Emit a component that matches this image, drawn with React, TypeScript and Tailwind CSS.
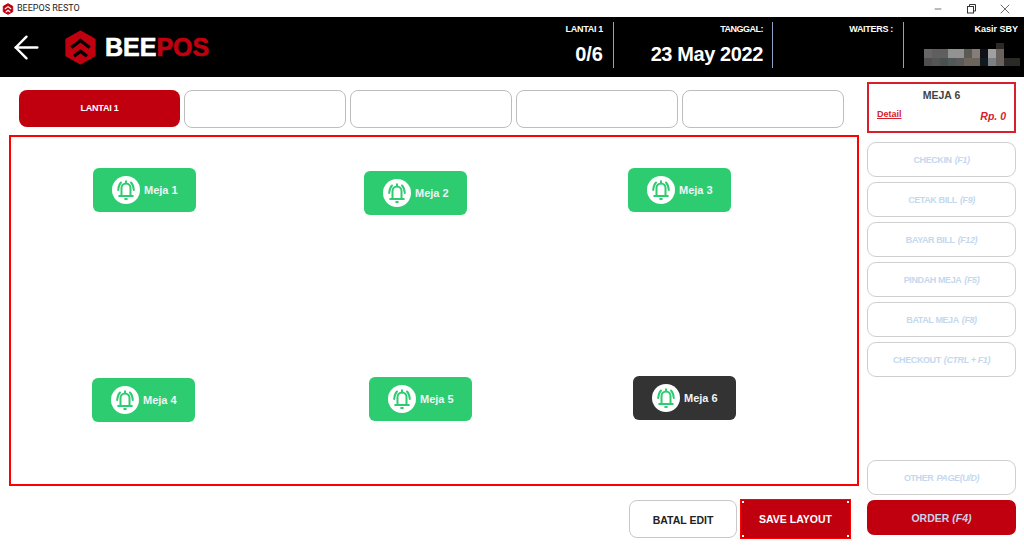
import { ArrowLeft, Minus, X } from "lucide-react";

const tables = [
  { name: "Meja 1", pos: "left-[82px] top-[31px]" },
  { name: "Meja 2", pos: "left-[353px] top-[34px]" },
  { name: "Meja 3", pos: "left-[617px] top-[31px]" },
  { name: "Meja 4", pos: "left-[81px] top-[241px]" },
  { name: "Meja 5", pos: "left-[358px] top-[240px]" },
  { name: "Meja 6", pos: "left-[622px] top-[239px]", active: true },
];

const sideButtons = [
  ["CHECKIN", "(F1)"],
  ["CETAK BILL", "(F9)"],
  ["BAYAR BILL", "(F12)"],
  ["PINDAH MEJA", "(F5)"],
  ["BATAL MEJA", "(F8)"],
  ["CHECKOUT", "(CTRL + F1)"],
];

// blurred cashier name in the header
const mosaic = [
  "bg-black", "bg-black", "bg-black", "bg-black", "bg-black", "bg-black", "bg-black", "bg-black", "bg-black", "bg-[#2c2826]", "bg-black", "bg-black",
  "bg-[#666666]", "bg-[#5f5f5f]", "bg-[#5f5f5f]", "bg-[#929292]", "bg-[#929292]", "bg-[#5a5a55]", "bg-[#857d78]", "bg-[#0f1018]", "bg-[#a0a0a0]", "bg-[#6a625e]", "bg-black", "bg-black",
  "bg-[#4f4f4f]", "bg-[#555555]", "bg-[#4a5050]", "bg-[#505858]", "bg-[#5a5a5a]", "bg-[#6d655c]", "bg-[#6d655c]", "bg-[#101820]", "bg-[#7a8085]", "bg-[#6a625e]", "bg-[#2a2a28]", "bg-[#2b2b26]",
];

function Logo({ w, h, mark }: { w: number; h: number; mark: string }) {
  return (
    <svg width={w} height={h} viewBox="0 0 36 38">
      <path d="M18 2 L33 10.5 V27.5 L18 36 L3 27.5 V10.5 Z" fill="#c1000f" stroke="#c1000f" strokeWidth="3" strokeLinejoin="round" />
      <path d="M8 19 L18 11.5 L28 19" fill="none" stroke={mark} strokeWidth="3.6" />
      <path d="M11 28.5 L18 23 L25 28.5" fill="none" stroke={mark} strokeWidth="3.6" />
    </svg>
  );
}

function Bell() {
  return (
    <svg width="28" height="28" viewBox="0 0 28 28" fill="none" stroke="#2ecc71" strokeWidth="2" strokeLinecap="round">
      <path d="M9.5 19.5 V12 a4.5 4.5 0 0 1 9 0 V19.5" />
      <path d="M14 5.2 v2" />
      <path d="M7.2 20 H20.8" />
      <path d="M13.2 23 h1.6" />
      <path d="M9 6.5 Q6.5 9 6.2 14" />
      <path d="M19 6.5 Q21.5 9 21.8 14" />
    </svg>
  );
}

function Table({ name, pos, active }: { name: string; pos: string; active?: boolean }) {
  return (
    <div
      className={`absolute ${pos} w-[103px] h-[44px] rounded-[6px] flex items-center pl-[19px] gap-[4px] ${
        active ? "bg-[#333333]" : "bg-[#2ecc71]"
      }`}
    >
      <div className="w-[28px] h-[28px] rounded-full bg-white">
        <Bell />
      </div>
      <span className="text-[11px] font-bold text-[#f0f4f8]">{name}</span>
    </div>
  );
}

function SideButton({ label, keys }: { label: string; keys: string }) {
  return (
    <div className="h-[35px] pt-[2px] rounded-[9px] border border-[#cfcfcf] bg-white flex items-center justify-center gap-[3px] text-[9px] font-bold tracking-[-0.4px] text-[#c5d8ee]">
      <span>{label}</span>
      <span className="italic">{keys}</span>
    </div>
  );
}

function Corner({ pos }: { pos: string }) {
  return <div className={`absolute ${pos} w-[2px] h-[2px] bg-white`} />;
}

export default function App() {
  return (
    <div className="w-[1024px] h-[546px] overflow-hidden bg-white flex flex-col font-['Liberation_Sans',Arial,sans-serif]">
      {/* Title bar */}
      <div className="h-[17px] flex items-center pl-[2px] text-[#222]">
        <Logo w={12} h={12} mark="#ffffff" />
        <span className="ml-[3px] text-[9px] font-['Roboto',sans-serif]">BEEPOS RESTO</span>
        <div className="ml-auto flex items-center gap-[21px] pr-[11px]">
          <Minus className="w-[10px] h-[10px] mr-[2px]" strokeWidth={1.5} />
          <svg width="10" height="10" viewBox="0 0 10 10" fill="none" stroke="#333" strokeWidth="1">
            <rect x="1.5" y="2.5" width="6" height="6.5" />
            <path d="M3.5 2.5 V0.5 H9.5 V7 H7.5" />
          </svg>
          <X className="w-[16px] h-[16px]" strokeWidth={1} />
        </div>
      </div>

      {/* Header */}
      <header className="h-[60px] bg-black flex text-white">
        <div className="flex items-center pl-[8px]">
          <ArrowLeft className="w-[37px] h-[37px]" strokeWidth={1.6} />
          <div className="ml-[19px] flex">
            <Logo w={33} h={35} mark="#000000" />
          </div>
          <span className="ml-[8px] text-[25px] leading-none font-bold [-webkit-text-stroke:0.6px]">
            BEE<span className="text-[#c1000f]">POS</span>
          </span>
        </div>
        <div className="ml-auto flex h-[46px] mt-[5px]">
          <div className="w-[60px] pr-[10px] text-right border-r border-[#8fa3c7] box-content">
            <div className="text-[9px] font-bold leading-[12px] mt-[1px] tracking-[-0.3px]">LANTAI 1</div>
            <div className="text-[20px] font-bold leading-[23px] mt-[8px]">0/6</div>
          </div>
          <div className="w-[149px] pr-[9px] text-right border-r border-[#8fa3c7] box-content">
            <div className="text-[9px] font-bold leading-[12px] mt-[1px] tracking-[-0.5px]">TANGGAL:</div>
            <div className="text-[20px] font-bold leading-[23px] mt-[8px] tracking-[-0.4px]">23 May 2022</div>
          </div>
          <div className="w-[120px] pr-[10px] text-right border-r border-[#8fa3c7] box-content">
            <div className="text-[9px] font-bold leading-[12px] mt-[1px] tracking-[-0.3px]">WAITERS :</div>
          </div>
          <div className="w-[114px] pr-[6px] text-right box-content">
            <div className="text-[9px] font-bold leading-[12px] mt-[1px]">Kasir SBY</div>
            <div className="mt-[8px] ml-[20px] w-[96px] grid grid-cols-[repeat(12,8px)] grid-rows-[6px_9px_8px]">
              {mosaic.map((c, i) => (
                <div key={i} className={c} />
              ))}
            </div>
          </div>
        </div>
      </header>

      {/* Body */}
      <div className="flex-1 flex">
        <main className="w-[867px] flex flex-col">
          <div className="flex gap-[4px] pl-[19px] mt-[13px]">
            <div className="w-[161px] h-[37px] rounded-[8px] bg-[#c1000f] flex items-center justify-center text-[9px] font-bold tracking-[-0.2px] text-white">
              LANTAI 1
            </div>
            {[0, 1, 2, 3].map((i) => (
              <div key={i} className="w-[162px] h-[38px] rounded-[8px] border border-[#bdbdbd] bg-white" />
            ))}
          </div>

          <div className="relative ml-[9px] mt-[7px] w-[850px] h-[351px] border-2 border-[#ff0000]">
            {tables.map((t) => (
              <Table key={t.name} {...t} />
            ))}
          </div>

          <div className="flex justify-end gap-[3px] pr-[16px] mt-[14px]">
            <div className="w-[108px] h-[38px] pt-[3px] rounded-[8px] border border-[#c8c8c8] flex items-center justify-center text-[10.5px] font-bold text-[#222]">
              BATAL EDIT
            </div>
            <div className="relative w-[111px] h-[40px] -mt-[1px] pt-[2px] border border-[#ff0000] bg-[#c1000f] flex items-center justify-center text-[10.5px] font-bold text-white">
              SAVE LAYOUT
              <Corner pos="left-[1px] top-[1px]" />
              <Corner pos="right-[1px] top-[1px]" />
              <Corner pos="left-[1px] bottom-[1px]" />
              <Corner pos="right-[1px] bottom-[1px]" />
            </div>
          </div>
        </main>

        {/* Right panel */}
        <aside className="w-[149px] flex flex-col mt-[5px]">
          <div className="h-[51px] border-2 border-[#d8202c] px-[8px] pt-[4px]">
            <div className="text-center text-[10.5px] font-bold text-[#444] leading-[14px]">MEJA 6</div>
            <div className="flex justify-between items-center mt-[2px]">
              <span className="text-[9px] font-bold text-[#d8202c] underline">Detail</span>
              <span className="text-[10.5px] font-bold italic text-[#d8202c] mt-[5px]">Rp. 0</span>
            </div>
          </div>
          <div className="flex flex-col gap-[5px] mt-[9px]">
            {sideButtons.map(([label, keys]) => (
              <SideButton key={label} label={label} keys={keys} />
            ))}
          </div>
          <div className="mt-auto flex flex-col gap-[5px] mb-[11px]">
            <SideButton label="OTHER" keys="PAGE(U/D)" />
            <div className="h-[35px] pt-[2px] rounded-[7px] bg-[#c1000f] flex items-center justify-center gap-[3px] text-[10.5px] font-bold text-[#c5d4ea]">
              <span>ORDER</span>
              <span className="italic">(F4)</span>
            </div>
          </div>
        </aside>
      </div>
    </div>
  );
}
